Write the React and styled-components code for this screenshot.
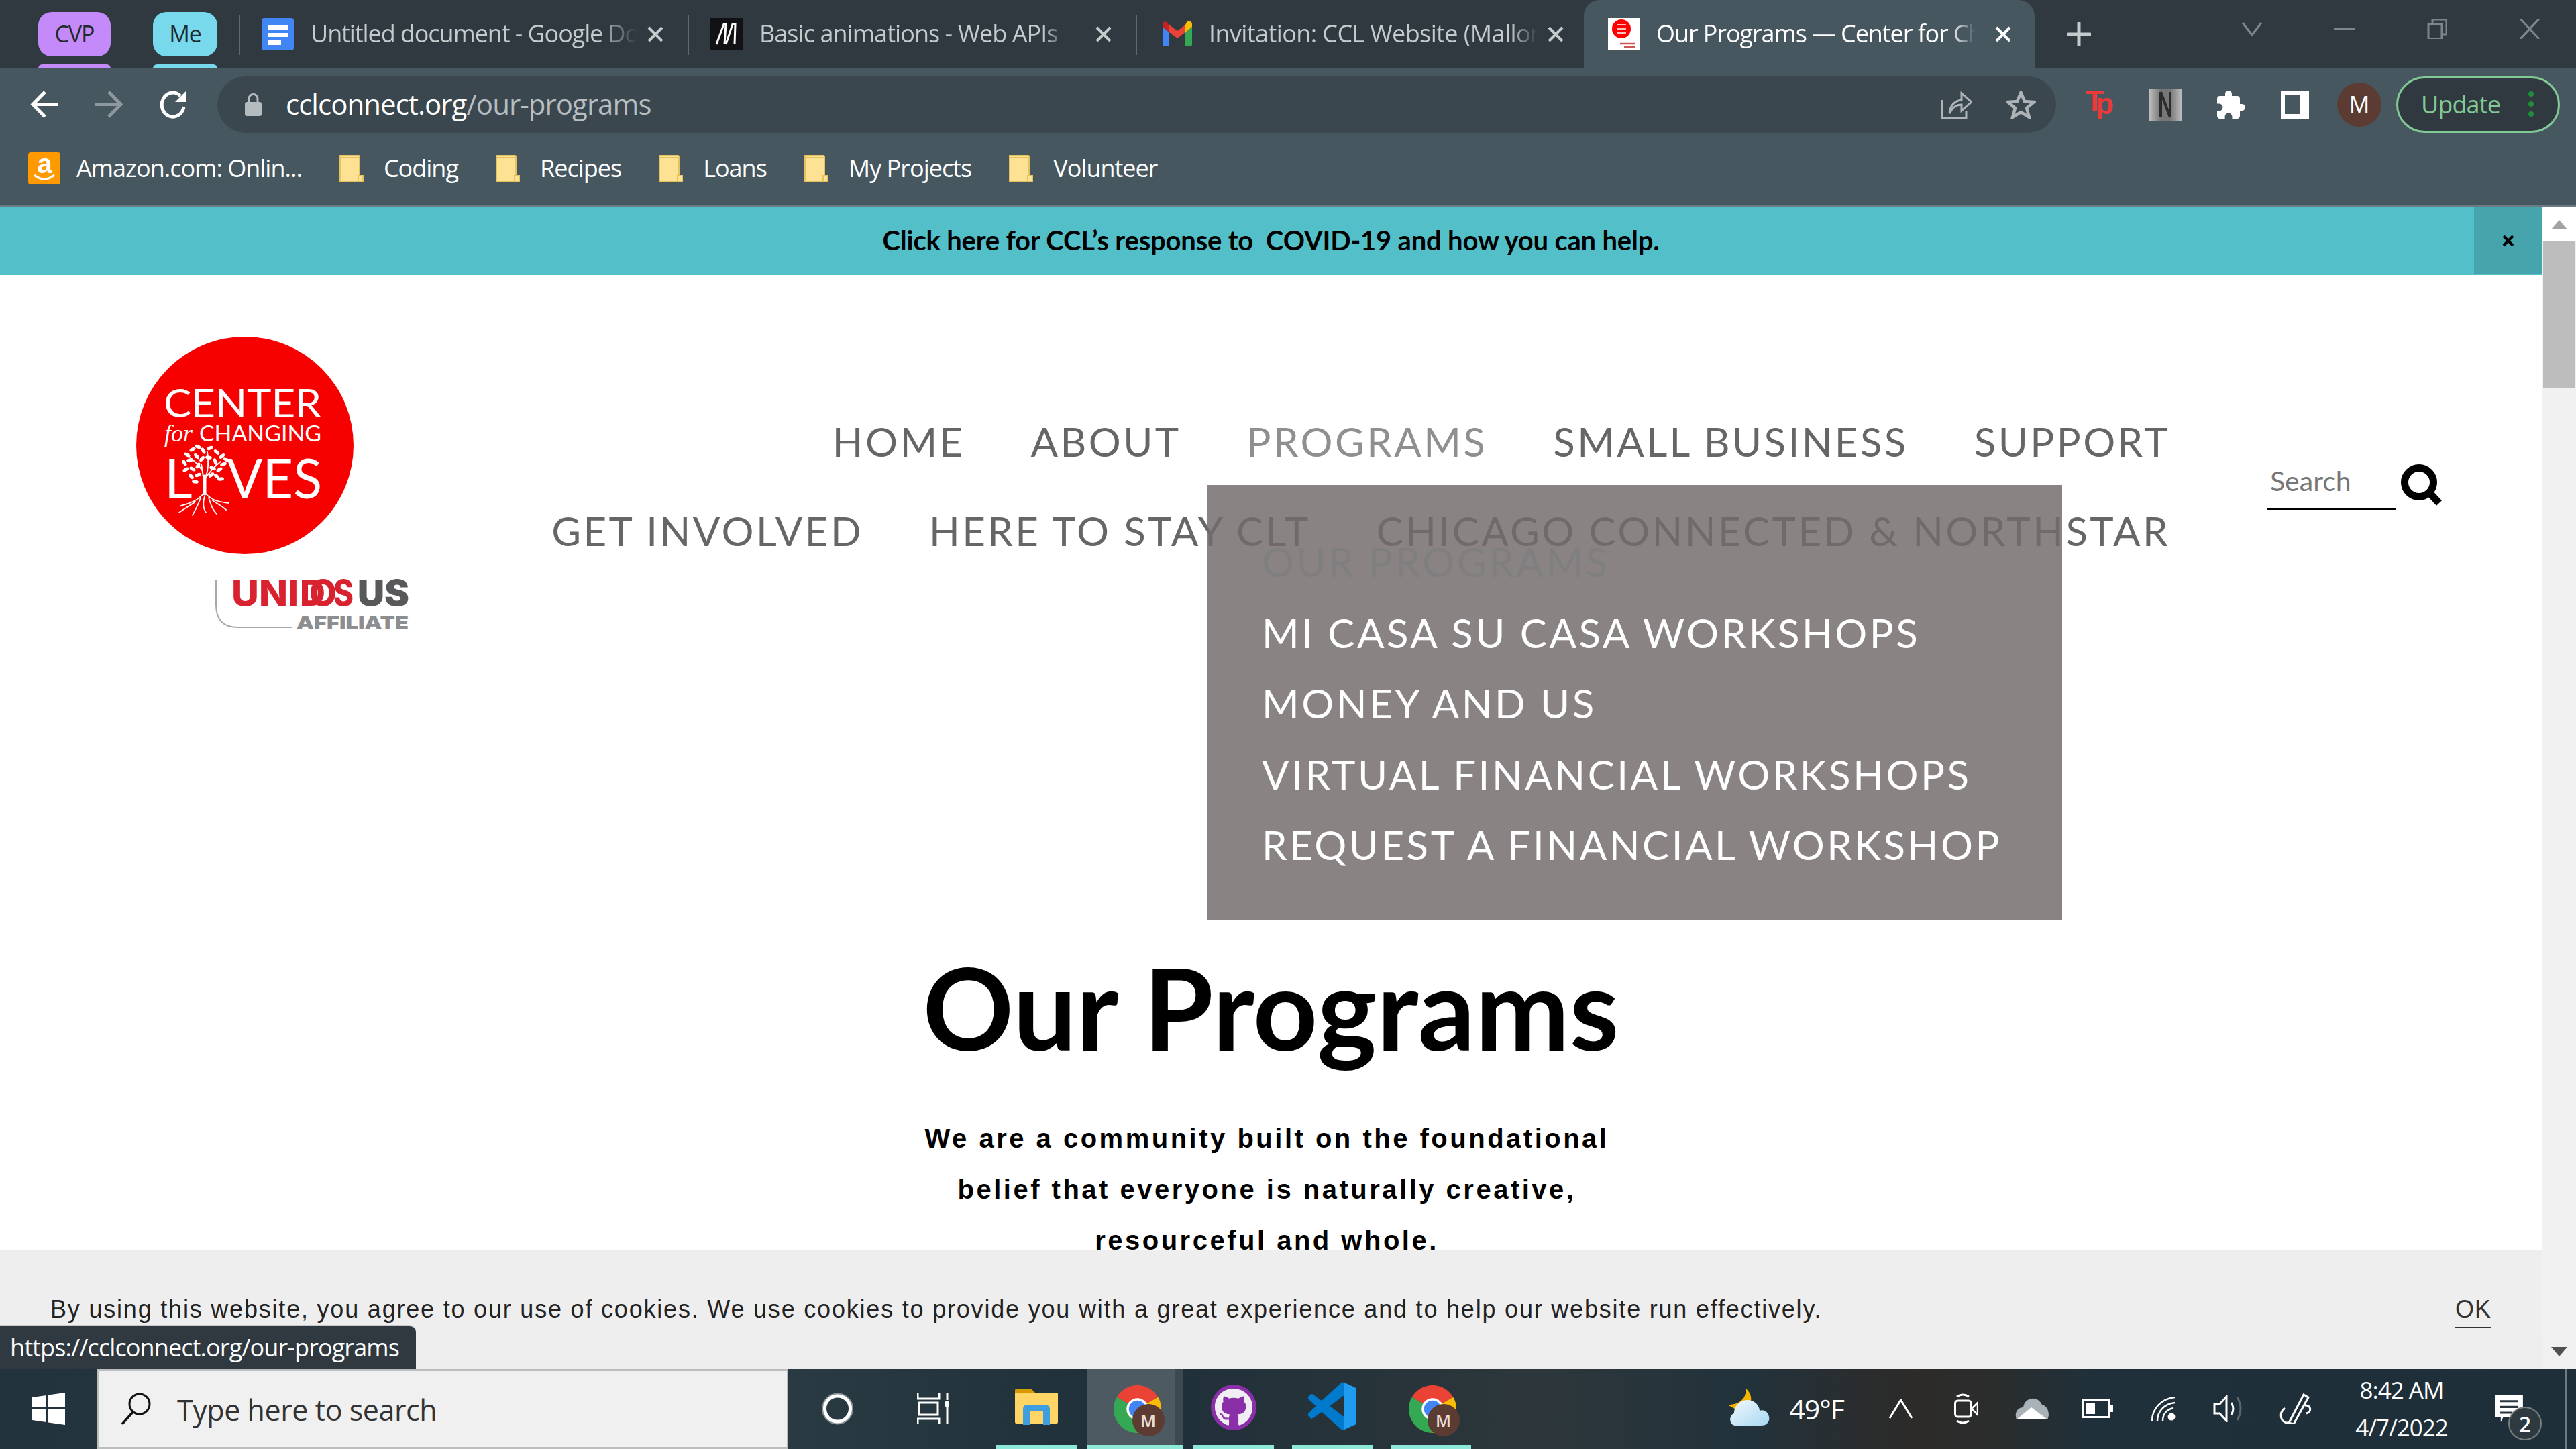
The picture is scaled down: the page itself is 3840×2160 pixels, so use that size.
import React from 'react';
import styled, { createGlobalStyle } from 'styled-components';
import { FaGithub } from 'react-icons/fa';

const UI = '"Open Sans", "Noto Sans", sans-serif';
const SITE = 'Lato, "Open Sans", sans-serif';

const Global = createGlobalStyle`
  html, body { margin: 0; padding: 0; background: #fff; }
  #root { width: 3840px; height: 2160px; }
  * { box-sizing: border-box; }
`;

const Screen = styled.div`
  width: 3840px; height: 2160px; overflow: hidden;
  display: flex; flex-direction: column;
  font-family: ${UI};
`;

/* ---------- tab strip ---------- */
const TabStrip = styled.div`
  height: 102px; flex: none; display: flex; align-items: stretch;
  background: #2f393f; padding-left: 57px;
`;
const GroupWrap = styled.div`
  display: flex; flex-direction: column; width: ${p => p.$w}px; margin-right: ${p => p.$mr}px;
  padding-top: 18px;
`;
const GroupPill = styled.div`
  height: 66px; border-radius: 20px; background: ${p => p.$c};
  color: #1f2a30; font-size: 34px; letter-spacing: -1px; padding-bottom: 3px;
  display: flex; align-items: center; justify-content: center;
`;
const GroupLine = styled.div`
  height: 6px; margin-top: 12px; border-radius: 6px 6px 0 0; background: ${p => p.$c};
`;
const Tab = styled.div`
  width: ${p => p.$w}px; flex: none; display: flex; align-items: center; position: relative;
  padding: 0 0 0 ${p => p.$pl || 34}px;
  color: ${p => (p.$active ? '#fff' : '#c5cacd')};
  ${p => p.$active && `background:#465760; border-radius: 24px 24px 0 0;`}
  ${p => p.$sep && `&::before { content:''; position:absolute; left:0; top:22px; height:60px; width:2px; background:#5f6a70; }`}
`;
const TabTitle = styled.div`
  width: ${p => p.$w}px; margin-left: ${p => p.$ml || 25}px; white-space: nowrap; overflow: hidden;
  font-size: 36px; letter-spacing: ${p => p.$ls || -1.1}px; padding-bottom: 4px;
  mask-image: linear-gradient(to right, #000 ${p => p.$stop || 92}%, transparent);
`;
const TabClose = styled.svg`
  width: 26px; height: 26px; margin-left: ${p => p.$ml || 14}px; flex: none;
`;
const NewTab = styled.svg`
  width: 36px; height: 36px; margin-left: 48px; align-self: center; flex: none;
`;
const WinControls = styled.div`
  margin-left: auto; display: flex; align-items: flex-start; padding: 28px 54px 0 0; gap: 108px;
`;
const WinIcon = styled.svg`
  width: 30px; height: 30px; flex: none;
`;

/* ---------- toolbar ---------- */
const Toolbar = styled.div`
  height: 96px; flex: none; background: #465760; display: flex; align-items: flex-end;
  padding: 0 25px 0 45px;
`;
const NavBtn = styled.svg`
  width: 43px; height: 43px; margin-right: 53px; margin-bottom: 21px; flex: none;
`;
const Omnibox = styled.div`
  width: 2741px; margin-left: -9px; height: 84px; flex: none; border-radius: 42px; background: #3a474f;
  display: flex; align-items: center; padding: 0 30px 0 41px;
`;
const UrlText = styled.div`
  margin-left: 36px; font-size: 42px; letter-spacing: -.95px; color: #fff; white-space: nowrap; padding-bottom: 3px;
  span { color: #b7bdc1; }
`;
const OmniIcons = styled.div`
  margin-left: auto; display: flex; gap: 50px; align-items: center;
`;
const ExtIcons = styled.div`
  flex: none; height: 84px; display: flex; align-items: center;
`;
const ExtSvg = styled.svg`
  width: ${p => p.$w}px; height: ${p => p.$h}px; margin-left: ${p => p.$ml}px; flex: none;
`;
const SidePanel = styled.div`
  width: 42px; height: 42px; margin-left: 51px; background: transparent;
  border: solid #fff; border-width: 7px 14px 7px 6px;
`;
const Avatar = styled.div`
  width: 66px; height: 66px; margin-left: 42px; border-radius: 50%; background: #5c3c32; color: #fff;
  font-size: 34px; display: flex; align-items: center; justify-content: center; padding-bottom: 2px;
`;
const UpdateBtn = styled.div`
  width: 244px; height: 84px; margin-left: 22px; border-radius: 42px; border: 3px solid #81c995;
  background: #2f393f; color: #81c995; font-size: 36px; letter-spacing: -.9px; padding-bottom: 2px;
  display: flex; align-items: center; padding-left: 34px; gap: 42px;
`;
const Dots = styled.div`
  display: flex; flex-direction: column; gap: 7px;
  i { width: 8px; height: 8px; border-radius: 50%; background: #1e8e3e; display: block; }
`;

/* ---------- bookmarks ---------- */
const Bookmarks = styled.div`
  height: 111px; flex: none; background: #465760; border-bottom: 3px solid #6b7b84;
  display: flex; align-items: center; padding: 0 0 3px 42px; gap: 56px;
`;
const Bookmark = styled.div`
  display: flex; align-items: center; gap: ${p => p.$gap || 30}px; color: #fff;
  font-size: 36px; letter-spacing: -1px; white-space: nowrap;
`;
const AmazonIcon = styled.svg` width: 48px; height: 48px; flex: none; `;
const FolderIcon = styled.svg` width: 36px; height: 42px; flex: none; `;

/* ---------- viewport ---------- */
const Viewport = styled.div`
  flex: 1; min-height: 0; display: flex;
`;
const Page = styled.div`
  flex: 1; position: relative; overflow: hidden; background: #fff;
`;
const Banner = styled.div`
  height: 101px; background: #53c0c9; display: flex; align-items: center; justify-content: center;
  font: 700 40px ${SITE}; color: #000; letter-spacing: -.2px; white-space: pre; padding-bottom: 3px;
`;
const BannerClose = styled.div`
  position: absolute; right: 0; top: 0; width: 101px; height: 100px; background: #46a4ac;
  display: flex; align-items: center; justify-content: center;
`;
const Header = styled.div`
  height: 993px; display: flex; align-items: flex-start; padding: 92px 0 0 203px;
`;
const LogoSvg = styled.svg`
  width: 420px; height: 440px; flex: none; overflow: visible;
`;
const NavMenu = styled.nav`
  flex: none; width: 2612px; padding-top: 90px; display: flex; flex-direction: column;
`;
const NavRow = styled.div`
  height: 133px; display: flex; justify-content: flex-end; gap: 98px;
`;
const NavLink = styled.a`
  font: 400 60px/133px ${SITE}; letter-spacing: 3.4px; text-transform: uppercase; white-space: nowrap;
  color: ${p => (p.$current ? '#8f8f8f' : '#666')};
`;
const SearchGroup = styled.div`
  margin-left: 144px; padding-top: 190px; display: flex; align-items: flex-start;
`;
const SearchField = styled.div`
  width: 192px; height: 68px; padding-left: 5px; border-bottom: 3px solid #000;
  font: 400 41px/50px ${SITE}; color: #777; white-space: nowrap;
`;
const SearchGlyph = styled.svg`
  width: 62px; height: 62px; margin-left: 8px; flex: none;
`;
const Main = styled.main`
  text-align: center;
`;
const Title = styled.h1`
  margin: 0; font: 700 168px/196px ${SITE}; color: #000;
`;
const Lead = styled.p`
  margin: 60px 12px 0 0; font: 700 40px/76px "Liberation Sans", sans-serif; color: #000; letter-spacing: 3.5px;
`;
const Dropdown = styled.div`
  position: absolute; left: 1799px; top: 414px; width: 1275px; height: 649px;
  background: rgba(114,107,107,.84); padding: 62px 0 0 82px;
`;
const DropItem = styled.div`
  font: 400 60px/105.5px ${SITE}; letter-spacing: 3.5px; white-space: nowrap; text-transform: uppercase;
  color: ${p => (p.$muted ? '#7f7f7f' : '#fff')};
`;
const CookieBar = styled.div`
  position: absolute; left: 0; right: 0; bottom: 0; height: 177px; background: #eee;
  display: flex; align-items: flex-start; justify-content: space-between; padding: 67px 75px 0 75px;
`;
const CookieText = styled.div`
  font: 400 36px/44px "Liberation Sans", sans-serif; letter-spacing: 1.8px; color: #222; white-space: nowrap;
`;
const CookieOk = styled.div`
  font: 400 36px/44px "Liberation Sans", sans-serif; letter-spacing: 1px; color: #333; border-bottom: 2px solid #333;
  height: 50px;
`;
const StatusBubble = styled.div`
  position: absolute; left: 0; bottom: 0; height: 65px; width: 620px; background: #2f393f; border-radius: 0 10px 0 0;
  color: #fff; font-size: 36px; letter-spacing: -.9px; padding-left: 15px; display: flex; align-items: center; white-space: nowrap;
  border-top: 2px solid #c8c8c8;
`;
const Scrollbar = styled.div`
  width: 51px; flex: none; background: #f1f1f1; display: flex; flex-direction: column; align-items: center;
`;
const ScrollEnd = styled.div`
  width: 51px; height: 51px; background: ${p => (p.$down ? '#f0f0f0' : '#fff')}; display: flex; align-items: center; justify-content: center;
  ${p => p.$down && 'margin-top:auto;'}
  i { display:block; width:0; height:0; border-left:12px solid transparent; border-right:12px solid transparent;
    ${p => (p.$down ? 'border-top:14px solid #505050;' : 'border-bottom:14px solid #a3a3a3;')} }
`;
const ScrollThumb = styled.div`
  width: 47px; height: 218px; background: #bdbdbd; flex: none;
`;

/* ---------- taskbar ---------- */
const Taskbar = styled.div`
  height: 120px; flex: none; display: flex; align-items: stretch; position: relative;
  background: linear-gradient(to right,#22333d 0,#2a3a42 1200px,#1f2f39 1700px,#2d373b 2300px,#22323b 2600px,#2d2b2a 2840px,#2b2d2c 2960px,#20303a 3120px,#1f2f39 100%);
`;
const StartBtn = styled.div`
  width: 145px; flex: none; display: flex; align-items: center; justify-content: center;
`;
const SearchBox = styled.div`
  width: 1030px; flex: none; background: #f0f0f0; border: solid #bdbdbd; border-width: 3px 2px;
  display: flex; align-items: center; padding-left: 33px; gap: 38px;
  font-size: 43px; letter-spacing: -.45px; color: #333;
`;
const SearchLabel = styled.span`
  padding-top: 2px;
`;
const SysCell = styled.div`
  width: ${p => p.$w}px; flex: none; display: flex; align-items: center; justify-content: center;
`;
const AppCell = styled.div`
  width: ${p => p.$w || 120}px; margin-left: ${p => p.$ml}px; flex: none; position: relative;
  display: flex; align-items: center; justify-content: center;
  background: ${p => (p.$active ? '#4e5a62' : 'transparent')};
  &::after { content:''; position:absolute; left:0; right:0; bottom:0; height:6px; background:#8de8d8; }
`;
const AppDivider = styled.div`
  position: absolute; right: 0; top: 0; bottom: 0; width: 12px; background: #3d4950;
`;
const BadgeIcon = styled.div`
  position: relative; width: 71px; height: 71px; left: ${p => p.$x || 0}px;
`;
const MiniAvatar = styled.div`
  position: absolute; left: 28px; top: 28px; width: 48px; height: 48px; border-radius: 50%; background: #5c3c32;
  color: #eadbd6; font-size: 25px; font-weight: 600; display: flex; align-items: center; justify-content: center;
`;
const GhCircle = styled.div`
  width: 68px; height: 68px; border-radius: 50%; background: #8a2fa8; color: #f0edf3;
  display: flex; align-items: center; justify-content: center; margin-top: -4px;
`;
const Tray = styled.div`
  margin-left: auto; display: flex; align-items: stretch; color: #fff; padding-right: 14px;
`;
const Weather = styled.div`
  display: flex; align-items: center; gap: 27px; font-size: 41px; letter-spacing: -1px; margin-right: 35px;
`;
const TrayCell = styled.div`
  width: 98px; flex: none; display: flex; align-items: center; justify-content: center;
`;
const Clock = styled.div`
  width: 220px; flex: none; display: flex; flex-direction: column; align-items: center; justify-content: center;
  font-size: 35px; letter-spacing: -1px; line-height: 56px;
`;
const Notif = styled.div`
  width: 136px; flex: none; border-right: 3px solid #6f7a80; position: relative; display: flex; align-items: center; justify-content: center;
  padding-right: 34px;
`;
const NotifBadge = styled.div`
  position: absolute; left: 49px; top: 57px; width: 50px; height: 50px; border-radius: 50%;
  background: #2f3a40; border: 2px solid #77817f; color: #fff; font-size: 32px; font-weight: 600;
  display: flex; align-items: center; justify-content: center;
`;

/* ---------- drawings ---------- */
const XGlyph = ({ c = '#c5cacd', ml }) => (
  <TabClose viewBox="0 0 26 26" $ml={ml}><path d="M3 3 L23 23 M23 3 L3 23" stroke={c} strokeWidth="4" /></TabClose>
);
const DocsIcon = () => (
  <svg width="48" height="48" viewBox="0 0 48 48" style={{ flex: 'none' }}>
    <rect width="48" height="48" rx="4" fill="#4285f4" />
    <path d="M9 10h30v7H9zM9 22h30v6H9zM9 33h20v7H9z" fill="#fff" />
  </svg>
);
const MdnIcon = () => (
  <svg width="48" height="48" viewBox="0 0 48 48" style={{ flex: 'none' }}>
    <rect width="48" height="48" fill="#121214" />
    <path d="M9 39 L20 9 H23 L21 39 M23 39 L33 9 H37 L36 39" stroke="#fff" strokeWidth="3" fill="none" />
  </svg>
);
const GmailIcon = () => (
  <svg width="48" height="48" viewBox="0 0 48 48" style={{ flex: 'none' }}>
    <path fill="#4285F4" d="M5 42h7V21L2 13v26a3 3 0 0 0 3 3z" />
    <path fill="#34A853" d="M36 42h7a3 3 0 0 0 3-3V13l-10 8z" />
    <path fill="#EA4335" d="M12 21 L24 30 36 21V10L24 19 12 10z" />
    <path fill="#FBBC04" d="M36 10v11l10-8V9c0-4-5-6-8-3z" />
    <path fill="#C5221F" d="M2 13l10 8V10L8 6C5 4 2 6 2 9z" />
  </svg>
);
const SiteFavicon = () => (
  <svg width="48" height="48" viewBox="0 0 48 48" style={{ flex: 'none' }}>
    <rect width="48" height="48" fill="#fff" />
    <circle cx="20" cy="16" r="14" fill="#f00" />
    <path d="M13 10h14M13 16h14M13 22h14" stroke="#fff" strokeWidth="1.6" />
    <path d="M18 38h22M24 43h16" stroke="#c55" strokeWidth="2.5" />
  </svg>
);
const ChromeLogo = () => (
  <svg width="71" height="71" viewBox="0 0 48 48">
    <path fill="#EA4335" d="M24 24 L3.2 12 A24 24 0 0 1 44.8 12 Z" />
    <path fill="#FBBC04" d="M24 24 L44.8 12 A24 24 0 0 1 24 48 Z" />
    <path fill="#34A853" d="M24 24 L24 48 A24 24 0 0 1 3.2 12 Z" />
    <circle cx="24" cy="24" r="11" fill="#fff" />
    <circle cx="24" cy="24" r="8.6" fill="#4285F4" />
  </svg>
);
const ChromeApp = ({ x }) => (
  <BadgeIcon $x={x}>
    <ChromeLogo />
    <MiniAvatar>M</MiniAvatar>
  </BadgeIcon>
);
const Folder = () => (
  <FolderIcon viewBox="0 0 36 42">
    <path d="M1 2h28l1 1v29h5v9H1z" fill="#fde293" stroke="#e3c25f" strokeWidth="2" />
    <path d="M28 41v-9h7" fill="none" stroke="#e3c25f" strokeWidth="2" />
    <path d="M1 5h29" stroke="#e3c25f" strokeWidth="2" />
  </FolderIcon>
);
const Amazon = () => (
  <AmazonIcon viewBox="0 0 48 48">
    <rect width="48" height="48" rx="4" fill="#f90" />
    <text x="24" y="31" textAnchor="middle" fontFamily="Liberation Sans, sans-serif" fontWeight="700" fontSize="40" fill="#fff">a</text>
    <path d="M9 34 Q24 46 39 34" stroke="#fff" strokeWidth="3.4" fill="none" />
  </AmazonIcon>
);

const leaves = [
  [76, 176, 30], [84, 168, -30], [92, 164, 20], [100, 170, 60], [110, 166, -20], [120, 172, 40], [128, 178, -40],
  [72, 188, 60], [80, 184, -10], [90, 178, 50], [98, 182, -50], [108, 180, 10], [118, 186, 70], [130, 190, -20],
  [134, 183, 30], [74, 198, -30], [84, 197, 30], [92, 192, -60], [114, 196, 20], [124, 198, -30], [82, 208, 50],
  [92, 206, -20], [120, 208, 40], [126, 212, -10], [88, 216, 10], [112, 206, -40]
];
const Logo = () => (
  <LogoSvg viewBox="0 0 420 440">
    <circle cx="162" cy="162" r="162" fill="#f60000" />
    <g fill="#fff" fontFamily="Lato, sans-serif">
      <text x="41" y="120" fontSize="58" textLength="235" lengthAdjust="spacingAndGlyphs">CENTER</text>
      <text x="42" y="156" fontSize="36" fontStyle="italic" fontFamily="Liberation Serif, serif">for</text>
      <text x="94" y="156" fontSize="33" textLength="182" lengthAdjust="spacingAndGlyphs">CHANGING</text>
      <text x="42" y="241" fontSize="81">L</text>
      <text x="135" y="241" fontSize="81" textLength="142" lengthAdjust="spacingAndGlyphs">VES</text>
    </g>
    {leaves.map(([x, y, r], i) => (
      <ellipse key={i} cx={x} cy={y} rx="5" ry="2.6" fill="#fff" transform={`rotate(${r} ${x} ${y})`} />
    ))}
    <g stroke="#fff" fill="none" strokeLinecap="round">
      <path d="M102 232 C101 215 100 205 97 190 M101 214 C110 200 118 192 126 186 M99 200 C92 190 86 184 80 180 M104 208 C108 196 108 184 106 172" strokeWidth="2" />
      <path d="M102 234 V208" strokeWidth="5" />
      <path d="M102 232 C92 244 82 248 66 252 M102 232 C112 244 122 246 138 248 M96 240 C92 252 88 258 84 266 M108 240 C112 252 114 258 120 264 M88 246 C80 252 72 256 64 262 M114 244 C122 250 128 252 134 258 M102 238 C99 248 100 256 104 262" strokeWidth="1.8" />
    </g>
    <path d="M119 363 V400 Q119 433 152 433 H232" fill="none" stroke="#a8a8a8" strokeWidth="2" />
    <g fontFamily="Inter, Lato, sans-serif" fontWeight="800" fontSize="53" fill="#d9222f">
      <text x="142" y="401" textLength="100" lengthAdjust="spacingAndGlyphs">UNI</text>
      <text x="244" y="401" textLength="38" lengthAdjust="spacingAndGlyphs">D</text>
      <text x="258" y="401" textLength="41" lengthAdjust="spacingAndGlyphs">O</text>
      <text x="294" y="401" textLength="30" lengthAdjust="spacingAndGlyphs">S</text>
    </g>
    <g fontFamily="Inter, Lato, sans-serif" fontWeight="900">
      <text x="330" y="401" fontSize="53" fill="#58595b" textLength="77" lengthAdjust="spacingAndGlyphs">US</text>
      <text x="239" y="435" fontSize="25" fill="#8c8e90" textLength="167" lengthAdjust="spacingAndGlyphs">AFFILIATE</text>
    </g>
  </LogoSvg>
);

const App = () => (
  <Screen>
    <Global />
    <TabStrip>
      <GroupWrap $w={108} $mr={63}>
        <GroupPill $c="#c58af9">CVP</GroupPill>
        <GroupLine $c="#c58af9" />
      </GroupWrap>
      <GroupWrap $w={96} $mr={32}>
        <GroupPill $c="#78d9ec">Me</GroupPill>
        <GroupLine $c="#78d9ec" />
      </GroupWrap>
      <Tab $w={669} $sep>
        <DocsIcon />
        <TabTitle $w={487} $stop={88}>Untitled document - Google Docs</TabTitle>
        <XGlyph />
      </Tab>
      <Tab $w={668} $sep>
        <MdnIcon />
        <TabTitle $w={460} $ls={-0.95}>Basic animations - Web APIs | MDN</TabTitle>
        <XGlyph ml={40} />
      </Tab>
      <Tab $w={668} $sep $pl={38}>
        <GmailIcon />
        <TabTitle $w={490} $ml={23} $ls={-0.6}>Invitation: CCL Website (Mallory)</TabTitle>
        <XGlyph />
      </Tab>
      <Tab $w={672} $active $pl={36}>
        <SiteFavicon />
        <TabTitle $w={476} $ml={24}>Our Programs — Center for Changing Lives</TabTitle>
        <XGlyph c="#fff" ml={28} />
      </Tab>
      <NewTab viewBox="0 0 36 36"><path d="M18 1V35M1 18H35" stroke="#c5cacd" strokeWidth="5" strokeLinecap="round" /></NewTab>
      <WinControls>
        <WinIcon viewBox="0 0 30 30"><path d="M1 6 L15 24 L29 6" fill="none" stroke="#7c878c" strokeWidth="3" /></WinIcon>
        <WinIcon viewBox="0 0 30 30"><path d="M0 15 H30" stroke="#7c878c" strokeWidth="3" /></WinIcon>
        <WinIcon viewBox="0 0 30 30"><path d="M2 8 H22 V30 H2Z M8 8 V1 H29 V23 H22" fill="none" stroke="#7c878c" strokeWidth="3" /></WinIcon>
        <WinIcon viewBox="0 0 30 30"><path d="M1 0 L29 30 M29 0 L1 30" stroke="#7c878c" strokeWidth="3" /></WinIcon>
      </WinControls>
    </TabStrip>

    <Toolbar>
      <NavBtn viewBox="0 0 43 43"><path d="M22 3 L4 21.5 L22 40 M4 21.5 H42" fill="none" stroke="#fff" strokeWidth="5" /></NavBtn>
      <NavBtn viewBox="0 0 43 43"><path d="M21 3 L39 21.5 L21 40 M39 21.5 H1" fill="none" stroke="#8d999f" strokeWidth="5" /></NavBtn>
      <NavBtn viewBox="0 0 43 43"><path d="M37 25 A16.5 18 0 1 1 32 9" fill="none" stroke="#fff" strokeWidth="5" /><path d="M41 1 V18 H24Z" fill="#fff" /></NavBtn>
      <Omnibox>
        <svg width="25" height="34" viewBox="0 0 25 34" style={{ flex: 'none' }}><rect y="13" width="25" height="21" rx="3" fill="#b5bcc0" /><path d="M6 14 V8 a6.5 6.5 0 0 1 13 0 V14" fill="none" stroke="#b5bcc0" strokeWidth="3" /></svg>
        <UrlText>cclconnect.org<span>/our-programs</span></UrlText>
        <OmniIcons>
          <svg width="46" height="42" viewBox="0 0 46 42"><path d="M1 14 V41 H37 V30" fill="none" stroke="#adb3b6" strokeWidth="3" /><path d="M12 34 C13 22 20 15 30 14 V4 L45 17 L30 30 V21 C22 21 16 26 12 34Z" fill="none" stroke="#adb3b6" strokeWidth="3" /></svg>
          <svg width="45" height="42" viewBox="0 0 45 42"><path d="M22.5 3 L28 16 L42 17 L31 26 L35 40 L22.5 32 L10 40 L14 26 L3 17 L17 16Z" fill="none" stroke="#adb3b6" strokeWidth="4.5" /></svg>
        </OmniIcons>
      </Omnibox>
      <ExtIcons>
        <ExtSvg $w={46} $h={44} $ml={45} viewBox="0 0 46 44">
          <text x="-1" y="32" fontFamily="Liberation Sans, sans-serif" fontWeight="700" fontSize="44" fill="#ea3a3a">T<tspan dx="-12" dy="4">p</tspan></text>
        </ExtSvg>
        <ExtSvg $w={48} $h={48} $ml={48} viewBox="0 0 48 48">
          <defs>
            <linearGradient id="bookGrad" x1="0" x2="1" y1="0" y2="0">
              <stop offset="0" stopColor="#bdbdbd" /><stop offset=".35" stopColor="#777" /><stop offset=".65" stopColor="#777" /><stop offset="1" stopColor="#bdbdbd" />
            </linearGradient>
          </defs>
          <rect width="48" height="48" fill="url(#bookGrad)" />
          <path d="M17 5 V43 M31 5 V43 M17 5 L31 43" stroke="#2c2c2c" strokeWidth="4" fill="none" />
        </ExtSvg>
        <ExtSvg $w={48} $h={46} $ml={49} viewBox="0 0 24 23" preserveAspectRatio="none">
          <path fill="#fff" d="M20.5 11H19V7c0-1.1-.9-2-2-2h-4V3.5C13 2.12 11.88 1 10.5 1S8 2.12 8 3.5V5H4c-1.1 0-1.99.9-1.99 2v3.8H3.5c1.49 0 2.7 1.21 2.7 2.7s-1.21 2.7-2.7 2.7H2V20c0 1.1.9 2 2 2h3.8v-1.5c0-1.49 1.21-2.7 2.7-2.7 1.49 0 2.7 1.21 2.7 2.7V22H17c1.1 0 2-.9 2-2v-4h1.5c1.38 0 2.5-1.12 2.5-2.5S21.88 11 20.5 11z" />
        </ExtSvg>
        <SidePanel />
        <Avatar>M</Avatar>
        <UpdateBtn>Update<Dots><i /><i /><i /></Dots></UpdateBtn>
      </ExtIcons>
    </Toolbar>

    <Bookmarks>
      <Bookmark $gap={24}><Amazon />Amazon.com: Onlin...</Bookmark>
      <Bookmark><Folder />Coding</Bookmark>
      <Bookmark><Folder />Recipes</Bookmark>
      <Bookmark><Folder />Loans</Bookmark>
      <Bookmark><Folder />My Projects</Bookmark>
      <Bookmark><Folder />Volunteer</Bookmark>
    </Bookmarks>

    <Viewport>
      <Page>
        <Banner>
          Click here for CCL’s response to  COVID-19 and how you can help.
          <BannerClose>
            <svg width="18" height="18" viewBox="0 0 18 18"><path d="M2 2 L16 16 M16 2 L2 16" stroke="#000" strokeWidth="4" /></svg>
          </BannerClose>
        </Banner>
        <Header>
          <Logo />
          <NavMenu>
            <NavRow>
              <NavLink>Home</NavLink>
              <NavLink>About</NavLink>
              <NavLink $current>Programs</NavLink>
              <NavLink>Small Business</NavLink>
              <NavLink>Support</NavLink>
            </NavRow>
            <NavRow>
              <NavLink>Get Involved</NavLink>
              <NavLink>Here to Stay CLT</NavLink>
              <NavLink>Chicago Connected &amp; Northstar</NavLink>
            </NavRow>
          </NavMenu>
          <SearchGroup>
            <SearchField>Search</SearchField>
            <SearchGlyph viewBox="0 0 62 62">
              <circle cx="27" cy="27" r="21.5" fill="none" stroke="#000" strokeWidth="11" />
              <path d="M41 41 L57 58" stroke="#000" strokeWidth="11" />
            </SearchGlyph>
          </SearchGroup>
        </Header>
        <Main>
          <Title>Our Programs</Title>
          <Lead>
            We are a community built on the foundational<br />
            belief that everyone is naturally creative,<br />
            resourceful and whole.
          </Lead>
        </Main>
        <Dropdown>
          <DropItem $muted>Our Programs</DropItem>
          <DropItem>Mi Casa Su Casa Workshops</DropItem>
          <DropItem>Money and Us</DropItem>
          <DropItem>Virtual Financial Workshops</DropItem>
          <DropItem>Request a Financial Workshop</DropItem>
        </Dropdown>
        <CookieBar>
          <CookieText>By using this website, you agree to our use of cookies. We use cookies to provide you with a great experience and to help our website run effectively.</CookieText>
          <CookieOk>OK</CookieOk>
        </CookieBar>
        <StatusBubble>https://cclconnect.org/our-programs</StatusBubble>
      </Page>
      <Scrollbar>
        <ScrollEnd><i /></ScrollEnd>
        <ScrollThumb />
        <ScrollEnd $down><i /></ScrollEnd>
      </Scrollbar>
    </Viewport>

    <Taskbar>
      <StartBtn>
        <svg width="49" height="48" viewBox="0 0 49 48"><path d="M0 7 L21 4 V22 H0Z M24 3.5 L49 0 V22 H24Z M0 25 H21 V44 L0 41Z M24 25 H49 V48 L24 44.5Z" fill="#fff" /></svg>
      </StartBtn>
      <SearchBox>
        <svg width="46" height="48" viewBox="0 0 46 48" style={{ flex: 'none' }}><circle cx="28" cy="17" r="15" fill="none" stroke="#111" strokeWidth="3" /><path d="M18 29 L2 47" stroke="#111" strokeWidth="3.5" /></svg>
        <SearchLabel>Type here to search</SearchLabel>
      </SearchBox>
      <SysCell $w={147}>
        <svg width="47" height="48" viewBox="0 0 47 48"><circle cx="23.5" cy="24" r="19.5" fill="none" stroke="#fff" strokeWidth="6" /><circle cx="23.5" cy="24" r="22.5" fill="none" stroke="#8a9297" strokeWidth="2" /></svg>
      </SysCell>
      <SysCell $w={138}>
        <svg width="48" height="46" viewBox="0 0 48 46"><path d="M1 0 V8 H33 V0 M1 46 V38 H33 V46 M3 14 H31 V32 H3Z M45 0 V10 M45 20 V46" fill="none" stroke="#fff" strokeWidth="3" /><ellipse cx="45" cy="16" rx="4" ry="5" fill="#fff" /></svg>
      </SysCell>
      <AppCell $ml={25}>
        <svg width="64" height="54" viewBox="0 0 64 54" style={{ marginTop: -6 }}>
          <path d="M0 3 a3 3 0 0 1 3-3 H24 L30 6 L24 14 H0Z" fill="#d69a00" />
          <path d="M0 14 V6 H62 a2 2 0 0 1 2 2 V50 a2 2 0 0 1-2 2 H2 a2 2 0 0 1-2-2Z" fill="#ffd666" />
          <path d="M12 54 V30 a6 6 0 0 1 6-6 H46 a6 6 0 0 1 6 6 V54 H42 V34 H22 V54Z" fill="#3f9ee0" />
        </svg>
      </AppCell>
      <AppCell $ml={15} $w={144} $active>
        <ChromeApp x={3} />
        <AppDivider />
      </AppCell>
      <AppCell $ml={15}>
        <GhCircle><FaGithub size={58} /></GhCircle>
      </AppCell>
      <AppCell $ml={27}>
        <svg width="72" height="72" viewBox="0 0 100 100" style={{ marginTop: -8 }}>
          <path fillRule="evenodd" fill="#007acc" d="M74 99 a6 6 0 0 1-6-1 L28 62 10 75 a4 4 0 0 1-5 0 l-4-4 a4 4 0 0 1 0-6 L16 50 1 36 a4 4 0 0 1 0-6 l4-4 a4 4 0 0 1 5 0 l18 13 L68 2 a6 6 0 0 1 6-1 l22 10 a6 6 0 0 1 4 5 v68 a6 6 0 0 1-4 5 Z M75 27 L45 50 l30 23 Z" />
          <path fill="#1f9cf0" d="M74 1 l22 10 a6 6 0 0 1 4 5 v68 a6 6 0 0 1-4 5 l-22 10 Z" />
        </svg>
      </AppCell>
      <AppCell $ml={27}>
        <ChromeApp x={2} />
      </AppCell>
      <Tray>
        <Weather>
          <svg width="65" height="56" viewBox="0 0 65 56" style={{ marginTop: -6 }}>
            <defs>
              <linearGradient id="cloudGrad" x1="0" x2="1" y1="0" y2="1">
                <stop offset="0" stopColor="#f2f9fd" /><stop offset="1" stopColor="#a9d7f2" />
              </linearGradient>
            </defs>
            <path d="M27 0 C40 12 38 28 20 36 L0 25 C16 26 30 16 27 0Z" fill="#f4b400" />
            <path d="M12 56 C2 56 2 40 10 38 C10 28 18 18 30 18 C42 18 48 28 48 34 C60 30 66 46 60 52 C58 55 54 56 50 56Z" fill="url(#cloudGrad)" />
          </svg>
          49°F
        </Weather>
        <TrayCell><svg width="37" height="30" viewBox="0 0 37 30"><path d="M2 29 L18.5 2 L35 29" fill="none" stroke="#fff" strokeWidth="3" /></svg></TrayCell>
        <TrayCell><svg width="36" height="46" viewBox="0 0 36 46"><rect x="1.5" y="11" width="24" height="24" rx="4" fill="none" stroke="#fff" strokeWidth="3" /><path d="M26 23 L35 14 V32Z" fill="none" stroke="#fff" strokeWidth="2.5" /><path d="M4 5 Q13 -1 22 5 M4 41 Q13 47 22 41" fill="none" stroke="#fff" strokeWidth="3" /></svg></TrayCell>
        <TrayCell><svg width="50" height="32" viewBox="0 0 50 32"><path d="M2 32 C-2 22 4 14 12 14 C14 -2 34 -4 40 10 C50 12 52 26 48 32Z" fill="#a9b2b6" /><path d="M2 32 L24 14 L48 32Z" fill="#fff" /></svg></TrayCell>
        <TrayCell><svg width="46" height="28" viewBox="0 0 46 28"><rect x="1.5" y="1.5" width="38" height="25" fill="none" stroke="#fff" strokeWidth="3" /><rect x="6" y="6" width="13" height="16" fill="#fff" /><rect x="41" y="9" width="5" height="10" fill="#fff" /></svg></TrayCell>
        <TrayCell><svg width="38" height="36" viewBox="0 0 38 36"><path d="M2 36 C2 18 16 3 36 1 M10 36 C10 22 20 11 36 9 M18 36 C18 26 24 19 34 17" fill="none" stroke="#fff" strokeWidth="2.5" /><circle cx="31" cy="30" r="5.5" fill="#fff" /></svg></TrayCell>
        <TrayCell><svg width="48" height="40" viewBox="0 0 48 40"><path d="M2 13 H10 L20 2 V38 L10 27 H2Z" fill="none" stroke="#fff" strokeWidth="3" /><path d="M27 11 Q33 20 27 29" fill="none" stroke="#fff" strokeWidth="3" /><path d="M36 3 Q46 20 36 37" fill="none" stroke="#5a666c" strokeWidth="3" /></svg></TrayCell>
        <TrayCell><svg width="50" height="46" viewBox="0 0 50 46"><path d="M16 44 L38 2 L45 6 L23 46Z" fill="none" stroke="#fff" strokeWidth="3" /><path d="M10 22 C0 30 4 44 14 44 M40 18 C50 18 50 28 42 30" fill="none" stroke="#fff" strokeWidth="3" /></svg></TrayCell>
        <Clock><div>8:42 AM</div><div>4/7/2022</div></Clock>
        <Notif>
          <svg width="48" height="40" viewBox="0 0 48 46"><path d="M0 0 H48 V38 H14 L10 46 V38 H0Z" fill="#fff" /><path d="M8 10 H40 M8 20 H40 M8 30 H30" stroke="#2b363c" strokeWidth="3.5" /></svg>
          <NotifBadge>2</NotifBadge>
        </Notif>
      </Tray>
    </Taskbar>
  </Screen>
);

export default App;
